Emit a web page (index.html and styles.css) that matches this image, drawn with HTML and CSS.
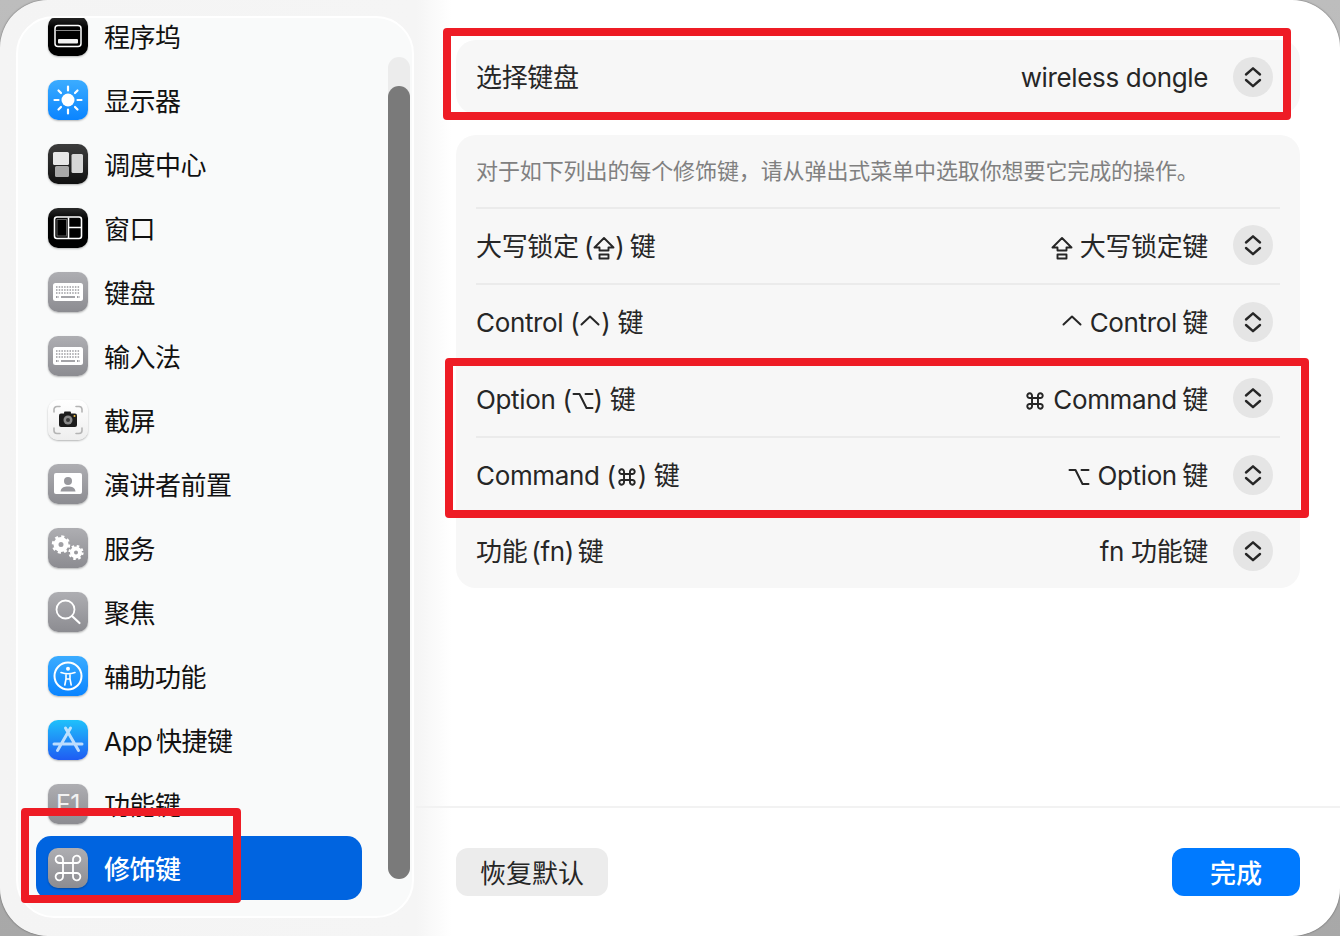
FILE: index.html
```html
<!DOCTYPE html>
<html lang="zh-CN">
<head>
<meta charset="utf-8">
<title>修饰键</title>
<link rel="stylesheet" href="styles.css">
</head>
<body>
<svg class="defs" aria-hidden="true">
  <symbol id="chev" viewBox="0 0 40 40"><path d="M13 17.500 20 11.300 27 17.500M13 23 20 29.200 27 23" fill="none" stroke="#262626" stroke-width="2.400" stroke-linecap="round" stroke-linejoin="round"/></symbol>
  <symbol id="caps" viewBox="0 0 24 24"><path d="M12 2 2.500 11.500H7.500V14.500H16.500V11.500H21.500L12 2Z M7.500 18.500H16.500V22.500H7.500Z" fill="none" stroke="currentColor" stroke-width="1.900" stroke-linejoin="round"/></symbol>
  <symbol id="ctrl" viewBox="0 0 24 24"><path d="M3.500 12.500 12 4.500 20.500 12.500" fill="none" stroke="currentColor" stroke-width="2" stroke-linecap="round" stroke-linejoin="round"/></symbol>
  <symbol id="opt" viewBox="0 0 24 24"><path d="M2.500 5H8.500L15.500 19H21.500M14.500 5H21.500" fill="none" stroke="currentColor" stroke-width="2" stroke-linecap="round" stroke-linejoin="round"/></symbol>
  <symbol id="cmd" viewBox="0 0 24 24"><g transform="translate(12 12) scale(.85) translate(-12 -12)"><path d="M8.500 8.500H15.500V15.500H8.500ZM8.500 8.500H6A2.800 2.800 0 1 1 8.500 6V8.500M15.500 8.500V6A2.800 2.800 0 1 1 18 8.500H15.500M15.500 15.500H18A2.800 2.800 0 1 1 15.500 18V15.500M8.500 15.500V18A2.800 2.800 0 1 1 6 15.500H8.500" fill="none" stroke="currentColor" stroke-width="2.300" stroke-linejoin="round"/></g></symbol>
  <symbol id="kbd" viewBox="0 0 40 40">
    <rect x="5" y="11" width="30" height="18" rx="2.500" fill="#fff"/>
    <path d="M8 15H32M8 18H32M8 21H32" stroke="#9a9a9f" stroke-width="1.500" stroke-dasharray="1.500 1.200"/>
    <path d="M13 25H27" stroke="#9a9a9f" stroke-width="1.800"/>
    <path d="M8 25H11M29 25H32" stroke="#9a9a9f" stroke-width="1.800" stroke-dasharray="1.500 1"/>
  </symbol>
</svg>

<div class="window">
  <aside class="sidebar">
    <nav class="panel">
      <ul class="list">
        <li class="item"><span class="tile tile-black"><svg viewBox="0 0 40 40"><rect x="7" y="9.500" width="26" height="21" rx="3" fill="none" stroke="#fff" stroke-width="1.500"/><path d="M8 14.500H32" stroke="#888" stroke-width="1"/><rect x="10" y="23" width="20" height="4.500" rx="1" fill="#f2f2f2"/></svg></span><span>程序坞</span></li>
        <li class="item"><span class="tile tile-blue"><svg viewBox="0 0 40 40"><circle cx="20" cy="20" r="6.500" fill="#fff"/><path d="M20 6.500V10.500M20 29.500V33.500M6.500 20H10.500M29.500 20H33.500M10.500 10.500 13 13M27 27 29.500 29.500M10.500 29.500 13 27M27 13 29.500 10.500" stroke="#fff" stroke-width="2.200" stroke-linecap="round"/></svg></span><span>显示器</span></li>
        <li class="item"><span class="tile tile-dark"><svg viewBox="0 0 40 40"><rect x="5" y="8" width="16" height="13" rx="1.500" fill="#e8e8e8"/><rect x="23.500" y="10" width="11.500" height="19" rx="1.500" fill="#d6d6d6"/><rect x="7" y="22" width="14" height="11" rx="1.500" fill="#a8a8a8"/></svg></span><span>调度中心</span></li>
        <li class="item"><span class="tile tile-black"><svg viewBox="0 0 40 40"><rect x="6.500" y="9" width="27" height="21.500" rx="2.500" fill="none" stroke="#fff" stroke-width="1.600"/><path d="M20.500 9.500V30M20.500 19.500H33" fill="none" stroke="#fff" stroke-width="1.600"/><rect x="9" y="11.500" width="9.500" height="16.500" fill="none" stroke="#777" stroke-width=".8"/></svg></span><span>窗口</span></li>
        <li class="item"><span class="tile tile-gray"><svg viewBox="0 0 40 40"><use href="#kbd"/></svg></span><span>键盘</span></li>
        <li class="item"><span class="tile tile-gray"><svg viewBox="0 0 40 40"><use href="#kbd"/></svg></span><span>输入法</span></li>
        <li class="item"><span class="tile tile-white"><svg viewBox="0 0 40 40"><path d="M6 12V9.500A3 3 0 0 1 9 6.500H12M28 6.500H31A3 3 0 0 1 34 9.500V12M34 28V30.500A3 3 0 0 1 31 33.500H28M12 33.500H9A3 3 0 0 1 6 30.500V28" fill="none" stroke="#b4b4b4" stroke-width="1.600" stroke-linecap="round"/><rect x="11" y="13.500" width="18" height="13.500" rx="2" fill="#1c1c1c"/><rect x="16" y="11.500" width="7" height="3" rx="1" fill="#1c1c1c"/><circle cx="20" cy="20" r="4.500" fill="#8a8a8a"/><circle cx="20" cy="20" r="2" fill="#3a3a3a"/><circle cx="26.500" cy="16" r="1" fill="#f5c542"/></svg></span><span>截屏</span></li>
        <li class="item"><span class="tile tile-gray"><svg viewBox="0 0 40 40"><rect x="6" y="9" width="28" height="21" rx="2" fill="#fff"/><circle cx="20" cy="17" r="4" fill="#98989d"/><path d="M12.500 27.500C13 23.500 16 22.500 20 22.500S27 23.500 27.500 27.500Z" fill="#98989d"/></svg></span><span>演讲者前置</span></li>
        <li class="item"><span class="tile tile-gray"><svg viewBox="0 0 40 40"><g fill="none" stroke="#fff"><circle cx="13" cy="16.500" r="5" stroke-width="5"/><circle cx="13" cy="16.500" r="8" stroke-width="2.500" stroke-dasharray="3.100 3.180"/><circle cx="28" cy="24.500" r="4" stroke-width="4"/><circle cx="28" cy="24.500" r="6.500" stroke-width="2.200" stroke-dasharray="2.550 2.550"/></g></svg></span><span>服务</span></li>
        <li class="item"><span class="tile tile-gray"><svg viewBox="0 0 40 40"><circle cx="17.500" cy="17.500" r="9" fill="none" stroke="#fff" stroke-width="1.800"/><path d="M24 24 31.500 31" stroke="#fff" stroke-width="2.200" stroke-linecap="round"/></svg></span><span>聚焦</span></li>
        <li class="item"><span class="tile tile-blue"><svg viewBox="0 0 40 40"><circle cx="20" cy="20" r="13.500" fill="none" stroke="#fff" stroke-width="2"/><circle cx="20" cy="12.800" r="2" fill="#fff"/><path d="M13 16.500C16 17.500 18 17.800 20 17.800S24 17.500 27 16.500M18 18V23L16.800 29M22 18V23L23.200 29M18 23H22" fill="none" stroke="#fff" stroke-width="1.600" stroke-linecap="round" stroke-linejoin="round"/></svg></span><span>辅助功能</span></li>
        <li class="item"><span class="tile tile-store"><svg viewBox="0 0 40 40"><path d="M22.500 8 9.500 30.500M17.500 8 30.500 30.500M6 24H34" stroke="#d8ecff" stroke-opacity=".85" stroke-width="3" stroke-linecap="round"/></svg></span><span class="tight">App 快捷键</span></li>
        <li class="item"><span class="tile tile-gray tile-text">F1</span><span>功能键</span></li>
        <li class="item item-active"><span class="tile tile-gray"><svg viewBox="0 0 40 40"><path d="M15 15H25V25H15ZM15 15H11.500A3.700 3.700 0 1 1 15 11.500V15M25 15V11.500A3.700 3.700 0 1 1 28.500 15H25M25 25H28.500A3.700 3.700 0 1 1 25 28.500V25M15 25V28.500A3.700 3.700 0 1 1 11.500 25H15" fill="none" stroke="#fff" stroke-width="1.800" stroke-linejoin="round"/></svg></span><span>修饰键</span></li>
      </ul>
      <div class="track"><div class="thumb"></div></div>
    </nav>
  </aside>

  <main class="main">
    <div class="content">
      <section class="card card-top">
        <div class="row row-plain">
          <span>选择键盘</span>
          <span class="val val-latin">wireless dongle</span>
          <button class="pop"><svg viewBox="0 0 40 40"><use href="#chev"/></svg></button>
        </div>
      </section>
      <section class="card">
        <p class="hint">对于如下列出的每个修饰键，请从弹出式菜单中选取你想要它完成的操作。</p>
        <div class="row">
          <span class="tight-s">大写锁定 (<svg class="gl"><use href="#caps"/></svg>) 键</span>
          <span class="val"><svg class="gl"><use href="#caps"/></svg> 大写锁定键</span>
          <button class="pop"><svg viewBox="0 0 40 40"><use href="#chev"/></svg></button>
        </div>
        <div class="row row-b">
          <span>Control (<svg class="gl"><use href="#ctrl"/></svg>) 键</span>
          <span class="val"><svg class="gl"><use href="#ctrl"/></svg> <span class="tight-s">Control 键</span></span>
          <button class="pop"><svg viewBox="0 0 40 40"><use href="#chev"/></svg></button>
        </div>
        <div class="row">
          <span>Option (<svg class="gl"><use href="#opt"/></svg>) 键</span>
          <span class="val"><svg class="gl"><use href="#cmd"/></svg> <span class="tight-s">Command 键</span></span>
          <button class="pop"><svg viewBox="0 0 40 40"><use href="#chev"/></svg></button>
        </div>
        <div class="row row-b">
          <span>Command (<svg class="gl"><use href="#cmd"/></svg>) 键</span>
          <span class="val"><svg class="gl"><use href="#opt"/></svg> <span class="tight-s">Option 键</span></span>
          <button class="pop"><svg viewBox="0 0 40 40"><use href="#chev"/></svg></button>
        </div>
        <div class="row row-last">
          <span class="tight">功能 (fn) 键</span>
          <span class="val">fn 功能键</span>
          <button class="pop"><svg viewBox="0 0 40 40"><use href="#chev"/></svg></button>
        </div>
      </section>
    </div>
    <footer class="footer">
      <button class="btn">恢复默认</button>
      <button class="btn btn-primary">完成</button>
    </footer>
  </main>
</div>

<div class="mark mark-a"></div>
<div class="mark mark-b"></div>
<div class="mark mark-c"></div>
</body>
</html>
```

FILE: styles.css
```css
* { box-sizing: border-box; }

html, body {
  margin: 0;
  padding: 0;
}

body {
  position: relative;
  width: 1340px;
  height: 936px;
  overflow: hidden;
  background: linear-gradient(#bdbdbd, #a8a8a8);
  font-family: Inter, "Noto Sans CJK SC", sans-serif;
  font-size: 26px;
  letter-spacing: -.35px;
  color: #262626;
}

.defs {
  position: absolute;
  width: 0;
  height: 0;
}

.tight { word-spacing: -3px; }
.tight-s { word-spacing: -1.500px; }

.window {
  display: flex;
  width: 1340px;
  height: 936px;
  border-radius: 48px;
  overflow: hidden;
  box-shadow: 0 0 2px rgba(0, 0, 0, .55);
  background: linear-gradient(to right, #f4f4f4 0, #f5f5f5 416px, #fff 452px);
}

/* sidebar */
.sidebar {
  flex: none;
  width: 416px;
  padding: 16px 2px 18px 16px;
}

.panel {
  position: relative;
  height: 902px;
  border: 2px solid #fff;
  border-radius: 38px;
  background: #f9fafa;
  overflow: hidden;
}

.list {
  list-style: none;
  margin: -14px 0 0;
  padding: 0 0 0 18px;
  letter-spacing: -.5px;
}

.item {
  display: flex;
  align-items: center;
  gap: 16px;
  width: 326px;
  height: 64px;
  padding-left: 12px;
  color: #111;
}

.item > span:last-child {
  padding-bottom: 2px;
}

.item-active {
  border-radius: 15px;
  background: #0064e0;
  color: #fff;
  font-weight: 500;
}

.tile {
  flex: none;
  display: block;
  width: 40px;
  height: 40px;
  border-radius: 10px;
  box-shadow: 0 1px 2px rgba(0, 0, 0, .28);
}

.tile svg {
  display: block;
  width: 40px;
  height: 40px;
}

.tile-black { background: linear-gradient(#2a2a2a, #000 30%); }
.tile-dark { background: linear-gradient(#3c3c3c, #101010); }
.tile-blue { background: linear-gradient(#3bacff, #0a84ff); }
.tile-gray { background: linear-gradient(#aeaeb2, #8c8c91); }
.tile-white { background: linear-gradient(#fff, #eee); }
.tile-store { background: linear-gradient(#1fc1fb, #1f5cf3); }

.tile-text {
  color: #f2f2f2;
  font-size: 25px;
  line-height: 40px;
  text-align: center;
}

.track {
  position: absolute;
  top: 39px;
  right: 2px;
  width: 22px;
  height: 822px;
  border-radius: 11px;
  background: #ececec;
}

.thumb {
  position: absolute;
  top: 29px;
  bottom: 0;
  width: 100%;
  border-radius: 11px;
  background: #7a7a7a;
}

/* main */
.main {
  flex: 1;
  display: flex;
  flex-direction: column;
  min-width: 0;
}

.content {
  flex: 1;
  display: flex;
  flex-direction: column;
  gap: 21px;
  padding: 40px 40px 0;
}

.card {
  border-radius: 20px;
  background: #f7f7f7;
  padding: 0 20px;
}

.hint {
  display: flex;
  align-items: center;
  height: 72px;
  margin: 0;
  padding-bottom: 4px;
  font-size: 22px;
  letter-spacing: -.1px;
  color: #808080;
}

.row {
  display: flex;
  align-items: center;
  height: 76px;
  box-shadow: inset 0 2px 0 #ebebeb;
}

.row-b { height: 77px; }

.row > span {
  padding-bottom: 2px;
}

.row-plain {
  height: 74px;
  box-shadow: none;
}

.row-plain > span {
  padding-bottom: 4px;
}

.row-plain > .val-latin {
  padding-bottom: 0;
}

.row-last { height: 75px; }

.val {
  margin-left: auto;
  margin-right: 25px;
}

.gl {
  display: inline-block;
  width: 24px;
  height: 24px;
  margin: 0 -1px;
  vertical-align: -4px;
  color: #262626;
}

.pop {
  flex: none;
  width: 40px;
  height: 40px;
  margin-right: 7px;
  padding: 0;
  border: 0;
  border-radius: 50%;
  background: #e5e5e5;
}

.pop svg {
  display: block;
  width: 40px;
  height: 40px;
}

.footer {
  flex: none;
  display: flex;
  justify-content: space-between;
  height: 130px;
  padding: 40px 40px 0;
  border-top: 2px solid #f2f2f2;
}

.btn {
  width: 152px;
  height: 48px;
  padding: 0 0 2px;
  border: 0;
  border-radius: 12px;
  background: #ececec;
  color: #262626;
  font: inherit;
}

.btn-primary {
  width: 128px;
  background: #007aff;
  color: #fff;
  font-weight: 500;
}

/* red annotation boxes drawn over the screenshot */
.mark {
  position: absolute;
  border: 8px solid #ee1c25;
  border-radius: 4px;
}

.mark-a { left: 443px; top: 28px; width: 848px; height: 92px; }
.mark-b { left: 445px; top: 358px; width: 864px; height: 160px; }
.mark-c { left: 21px; top: 808px; width: 220px; height: 95px; }
```
